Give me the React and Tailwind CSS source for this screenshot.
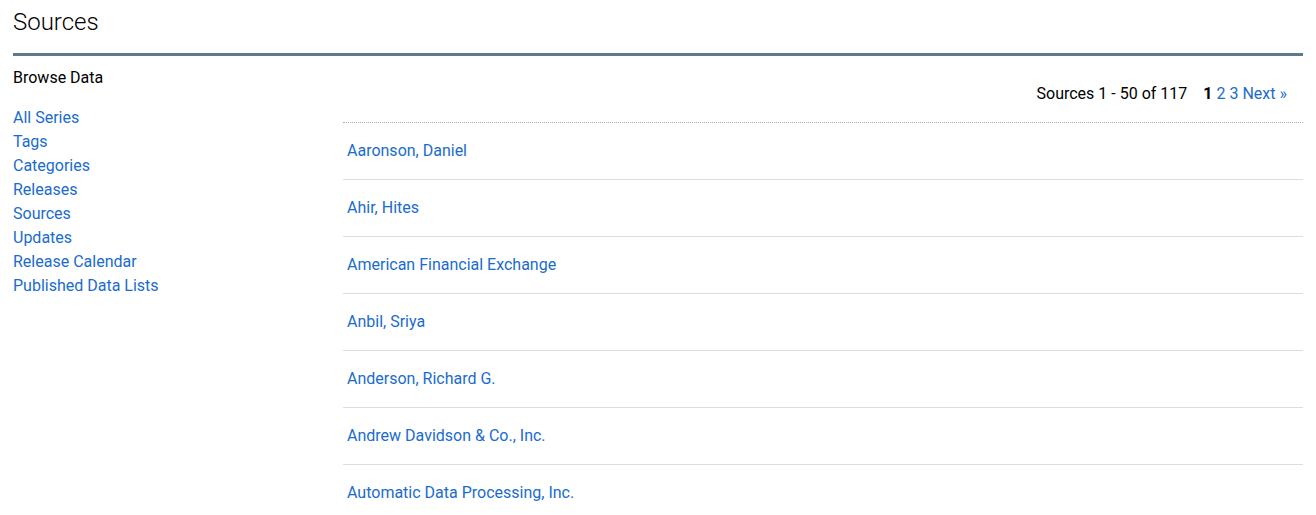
import React from "react";

const navLinks = [
  "All Series",
  "Tags",
  "Categories",
  "Releases",
  "Sources",
  "Updates",
  "Release Calendar",
  "Published Data Lists",
];

const sources = [
  "Aaronson, Daniel",
  "Ahir, Hites",
  "American Financial Exchange",
  "Anbil, Sriya",
  "Anderson, Richard G.",
  "Andrew Davidson & Co., Inc.",
  "Automatic Data Processing, Inc.",
];

const linkCls = "text-[#1a6ccc] hover:underline";

export default function App() {
  return (
    <div className="min-h-screen bg-white text-black font-['Roboto',sans-serif] text-[16px] leading-6">
      <div className="px-[13px] w-[1316px]">
        {/* ===== TITLE ===== */}
        <div className="w-[1290px] border-b-[3px] border-[#5b7a92] pt-[6px] pb-[15px]">
          <h1 className="text-[24px] leading-8 font-light">Sources</h1>
        </div>

        <div className="flex w-[1290px]">
          {/* ===== LEFT NAV ===== */}
          <div className="w-[330px] shrink-0 pt-[10px]">
            <div>Browse Data</div>
            <ul className="mt-4">
              {navLinks.map((n) => (
                <li key={n}>
                  <a href="#" className={linkCls}>
                    {n}
                  </a>
                </li>
              ))}
            </ul>
          </div>

          {/* ===== MAIN ===== */}
          <div className="flex-1 pt-[26px]">
            <div className="flex justify-end pr-4 pb-4 border-b border-dotted border-[#aaa]">
              <span>Sources 1 - 50 of 117</span>
              <span className="ml-4 font-bold">1</span>
              <a href="#" className={`${linkCls} ml-1`}>2</a>
              <a href="#" className={`${linkCls} ml-1`}>3</a>
              <a href="#" className={`${linkCls} ml-1`}>Next »</a>
            </div>
            <ul>
              {sources.map((s) => (
                <li key={s} className="px-1 py-4 border-b border-[#ddd]">
                  <a href="#" className={linkCls}>
                    {s}
                  </a>
                </li>
              ))}
            </ul>
          </div>
        </div>
      </div>
    </div>
  );
}
